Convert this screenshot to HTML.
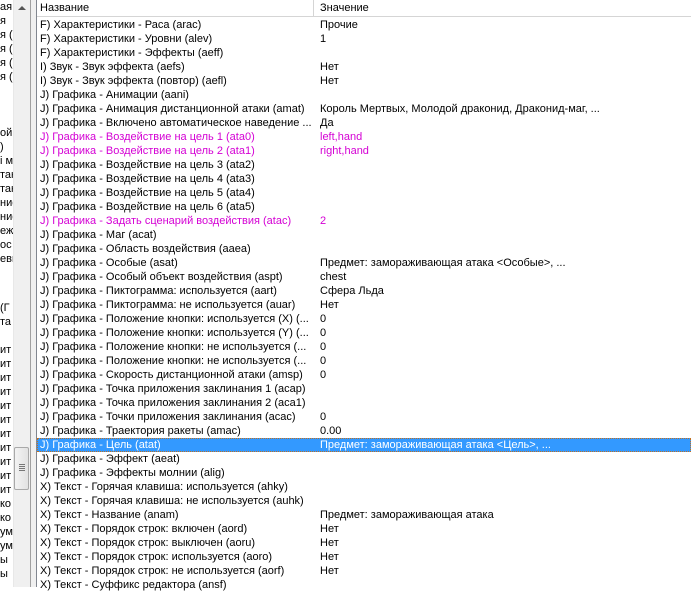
<!DOCTYPE html>
<html><head><meta charset="utf-8"><style>
*{margin:0;padding:0;box-sizing:border-box}
body{width:691px;height:587px;overflow:hidden;background:#fff;font-family:"Liberation Sans","DejaVu Sans",sans-serif;font-size:11px;color:#000;position:relative}
#left{position:absolute;left:0;top:0;width:13px;height:587px;overflow:hidden;white-space:nowrap}
#left div{position:absolute;left:0;height:14px;line-height:14px}
#sb{position:absolute;left:13px;top:0;width:17px;height:587px;background:#f0f0f0;border-left:1px solid #e8e8e8}
#thumb{position:absolute;left:14px;top:447px;width:15px;height:43px;border:1px solid #a9a9a9;border-radius:2px;background:linear-gradient(90deg,#f3f3f3,#e2e2e2)}
#split{position:absolute;left:30px;top:0;width:7px;height:587px;background:#f0f0f0;border-left:1px solid #a0a0a0;border-right:1px solid #828790}
#hdr{position:absolute;left:37px;top:0;width:654px;height:17px;background:#fff;border-bottom:1px solid #d5d5d5}
#hdr span{position:absolute;top:2px}
#hdr .d{position:absolute;left:276px;top:0;width:1px;height:16px;background:#d5d5d5}
.r{position:absolute;left:37px;width:654px;height:14px;line-height:14px;white-space:nowrap}
.r span{position:absolute;top:0}
.a{left:3px}.b{left:283px}
.m{color:#d400d4}
.sel{background:#3399ff;color:#fff;outline:1px dotted #c07020;outline-offset:-1px}
</style></head><body>
<div id="left">
<div style="top:0">ая</div><div style="top:14px">я</div><div style="top:28px">я (Н</div><div style="top:42px">я (н</div><div style="top:56px">я (с</div><div style="top:70px">я (ч</div>
<div style="top:126px">ой</div><div style="top:140px">)</div><div style="top:154px">і м</div><div style="top:168px">тан</div><div style="top:182px">тан</div><div style="top:196px">ние</div><div style="top:210px">ние</div><div style="top:224px">еж</div><div style="top:238px">ос</div><div style="top:252px">еви</div>
<div style="top:301px">(Г</div><div style="top:315px">та</div><div style="top:343px">ит</div><div style="top:357px">ит</div><div style="top:371px">ит</div><div style="top:385px">ит</div><div style="top:399px">ит</div><div style="top:413px">ит</div><div style="top:427px">ит</div><div style="top:441px">ит</div><div style="top:455px">ит</div><div style="top:469px">ит</div><div style="top:483px">ит</div><div style="top:497px">ко</div><div style="top:511px">ко</div><div style="top:525px">ум</div><div style="top:539px">ум</div><div style="top:553px">ы</div><div style="top:567px">ы</div>
</div>
<div id="sb"><div style="position:absolute;left:4px;top:6px;width:0;height:0;border-left:4px solid transparent;border-right:4px solid transparent;border-bottom:4px solid #555"></div></div>
<div id="thumb"><div style="position:absolute;left:4px;top:16px;width:6px;height:1px;background:#777;box-shadow:0 2px 0 #777,0 4px 0 #777,0 6px 0 #777"></div></div>
<div id="split"></div>
<div id="hdr"><span style="left:3px">Название</span><div class="d"></div><span style="left:283px">Значение</span></div>
<div class="r" style="top:18px"><span class="a">F) Характеристики - Раса (arac)</span><span class="b">Прочие</span></div>
<div class="r" style="top:32px"><span class="a">F) Характеристики - Уровни (alev)</span><span class="b">1</span></div>
<div class="r" style="top:46px"><span class="a">F) Характеристики - Эффекты (aeff)</span></div>
<div class="r" style="top:60px"><span class="a">I) Звук - Звук эффекта (aefs)</span><span class="b">Нет</span></div>
<div class="r" style="top:74px"><span class="a">I) Звук - Звук эффекта (повтор) (aefl)</span><span class="b">Нет</span></div>
<div class="r" style="top:88px"><span class="a">J) Графика - Анимации (aani)</span></div>
<div class="r" style="top:102px"><span class="a">J) Графика - Анимация дистанционной атаки (amat)</span><span class="b">Король Мертвых, Молодой драконид, Драконид-маг, ...</span></div>
<div class="r" style="top:116px"><span class="a">J) Графика - Включено автоматическое наведение ...</span><span class="b">Да</span></div>
<div class="r m" style="top:130px"><span class="a">J) Графика - Воздействие на цель 1 (ata0)</span><span class="b">left,hand</span></div>
<div class="r m" style="top:144px"><span class="a">J) Графика - Воздействие на цель 2 (ata1)</span><span class="b">right,hand</span></div>
<div class="r" style="top:158px"><span class="a">J) Графика - Воздействие на цель 3 (ata2)</span></div>
<div class="r" style="top:172px"><span class="a">J) Графика - Воздействие на цель 4 (ata3)</span></div>
<div class="r" style="top:186px"><span class="a">J) Графика - Воздействие на цель 5 (ata4)</span></div>
<div class="r" style="top:200px"><span class="a">J) Графика - Воздействие на цель 6 (ata5)</span></div>
<div class="r m" style="top:214px"><span class="a">J) Графика - Задать сценарий воздействия (atac)</span><span class="b">2</span></div>
<div class="r" style="top:228px"><span class="a">J) Графика - Маг (acat)</span></div>
<div class="r" style="top:242px"><span class="a">J) Графика - Область воздействия (aaea)</span></div>
<div class="r" style="top:256px"><span class="a">J) Графика - Особые (asat)</span><span class="b">Предмет: замораживающая атака &lt;Особые&gt;, ...</span></div>
<div class="r" style="top:270px"><span class="a">J) Графика - Особый объект воздействия (aspt)</span><span class="b">chest</span></div>
<div class="r" style="top:284px"><span class="a">J) Графика - Пиктограмма: используется (aart)</span><span class="b">Сфера Льда</span></div>
<div class="r" style="top:298px"><span class="a">J) Графика - Пиктограмма: не используется (auar)</span><span class="b">Нет</span></div>
<div class="r" style="top:312px"><span class="a">J) Графика - Положение кнопки: используется (X) (...</span><span class="b">0</span></div>
<div class="r" style="top:326px"><span class="a">J) Графика - Положение кнопки: используется (Y) (...</span><span class="b">0</span></div>
<div class="r" style="top:340px"><span class="a">J) Графика - Положение кнопки: не используется (...</span><span class="b">0</span></div>
<div class="r" style="top:354px"><span class="a">J) Графика - Положение кнопки: не используется (...</span><span class="b">0</span></div>
<div class="r" style="top:368px"><span class="a">J) Графика - Скорость дистанционной атаки (amsp)</span><span class="b">0</span></div>
<div class="r" style="top:382px"><span class="a">J) Графика - Точка приложения заклинания 1 (acap)</span></div>
<div class="r" style="top:396px"><span class="a">J) Графика - Точка приложения заклинания 2 (aca1)</span></div>
<div class="r" style="top:410px"><span class="a">J) Графика - Точки приложения заклинания (acac)</span><span class="b">0</span></div>
<div class="r" style="top:424px"><span class="a">J) Графика - Траектория ракеты (amac)</span><span class="b">0.00</span></div>
<div class="r sel" style="top:438px"><span class="a">J) Графика - Цель (atat)</span><span class="b">Предмет: замораживающая атака &lt;Цель&gt;, ...</span></div>
<div class="r" style="top:452px"><span class="a">J) Графика - Эффект (aeat)</span></div>
<div class="r" style="top:466px"><span class="a">J) Графика - Эффекты молнии (alig)</span></div>
<div class="r" style="top:480px"><span class="a">X) Текст - Горячая клавиша: используется (ahky)</span></div>
<div class="r" style="top:494px"><span class="a">X) Текст - Горячая клавиша: не используется (auhk)</span></div>
<div class="r" style="top:508px"><span class="a">X) Текст - Название (anam)</span><span class="b">Предмет: замораживающая атака</span></div>
<div class="r" style="top:522px"><span class="a">X) Текст - Порядок строк: включен (aord)</span><span class="b">Нет</span></div>
<div class="r" style="top:536px"><span class="a">X) Текст - Порядок строк: выключен (aoru)</span><span class="b">Нет</span></div>
<div class="r" style="top:550px"><span class="a">X) Текст - Порядок строк: используется (aoro)</span><span class="b">Нет</span></div>
<div class="r" style="top:564px"><span class="a">X) Текст - Порядок строк: не используется (aorf)</span><span class="b">Нет</span></div>
<div class="r" style="top:578px"><span class="a">X) Текст - Суффикс редактора (ansf)</span></div>
</body></html>
